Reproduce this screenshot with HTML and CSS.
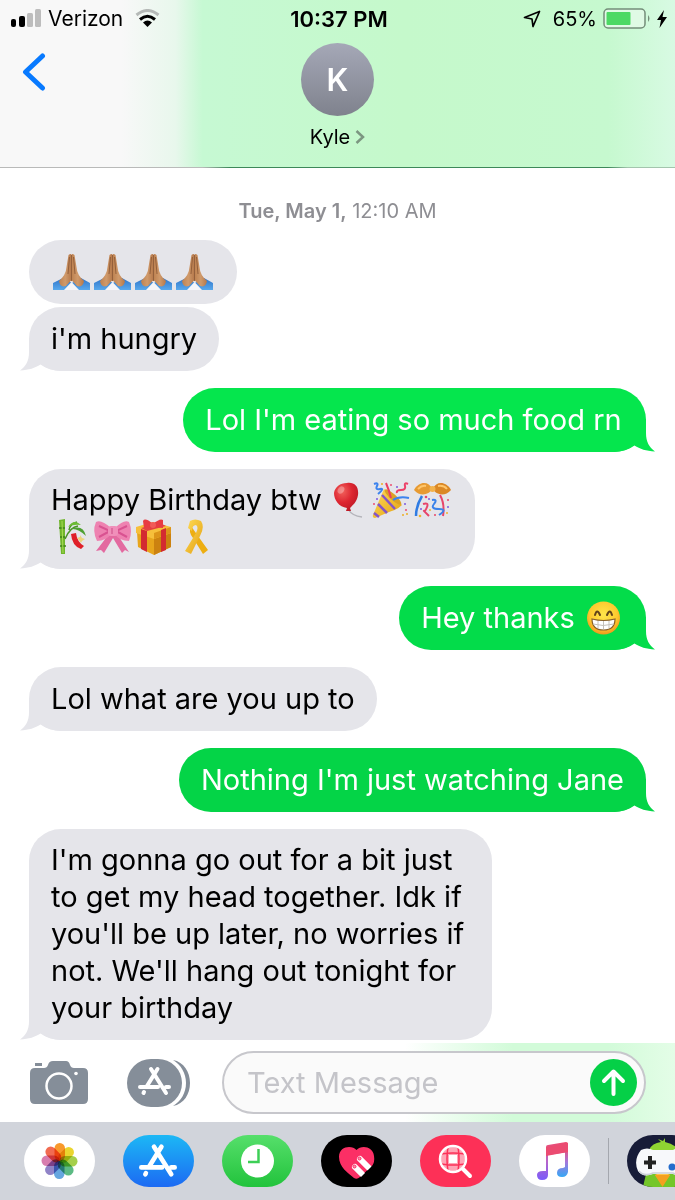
FILE: index.html
```html
<!DOCTYPE html>
<html lang="en">
<head>
<meta charset="utf-8">
<meta name="viewport" content="width=device-width, initial-scale=1">
<title>Kyle</title>
<link rel="stylesheet" href="styles.css">
</head>
<body>
<svg class="defs" aria-hidden="true">
  <defs>
    <linearGradient id="skin" x1="0" x2="1"><stop offset="0" stop-color="#bd8150"/><stop offset=".5" stop-color="#d09a6b"/><stop offset="1" stop-color="#b5784a"/></linearGradient>
    <linearGradient id="sleeve" x1="0" x2="0" y1="0" y2="1"><stop offset="0" stop-color="#2f74c9"/><stop offset="1" stop-color="#58a8ec"/></linearGradient>
    <radialGradient id="red" cx=".35" cy=".3" r=".8"><stop offset="0" stop-color="#f2625c"/><stop offset=".5" stop-color="#dd2631"/><stop offset="1" stop-color="#b81624"/></radialGradient>
    <linearGradient id="gold" x1="0" x2="1" y1="0" y2="1"><stop offset="0" stop-color="#ffdc58"/><stop offset="1" stop-color="#e3a012"/></linearGradient>
    <radialGradient id="face" cx=".5" cy=".4" r=".6"><stop offset="0" stop-color="#ffe64a"/><stop offset=".7" stop-color="#fdc92e"/><stop offset="1" stop-color="#f0981c"/></radialGradient>
    <linearGradient id="note" x1="0" x2="0" y1="0" y2="1"><stop offset="0" stop-color="#ef4a6d"/><stop offset=".5" stop-color="#b865c8"/><stop offset="1" stop-color="#7a5cfa"/></linearGradient>
    <linearGradient id="note-right" x1="0" x2="0" y1="0" y2="1"><stop offset="0" stop-color="#ef4a6d"/><stop offset=".5" stop-color="#a477dc"/><stop offset="1" stop-color="#35a8f5"/></linearGradient>
    <symbol id="tail" viewBox="0 0 41 33">
      <path d="M9 0V14C9 23 6 28 0 32.500C9 32 15 30 20.500 26.500C27 31 34 33 41 33V0Z"/>
    </symbol>
    <symbol id="pray" viewBox="0 0 41 36">
      <path d="M2 36V29L12 24L21 29L30 24L39 29V36H27L21 30L14 36Z" fill="url(#sleeve)"/>
      <path d="M17.500 1Q20 -1 20.500 1V26L15 32Q9 34 8 27Q15 21 15.500 13Z" fill="url(#skin)"/>
      <path d="M23.500 1Q21 -1 20.500 1V26L26 32Q32 34 33 27Q26 21 25.500 13Z" fill="url(#skin)"/>
      <path d="M20.500 1V27M18.500 3L17 20M22.500 3L24 20" stroke="#8f5a35" fill="none" stroke-width=".9"/>
      <path d="M20.500 28L13 36H28Z" fill="#f5f5f8"/>
    </symbol>
    <symbol id="balloon" viewBox="0 0 41 36">
      <path d="M18 27Q22 34 32 35" stroke="#b5b5bb" stroke-width="1.500" fill="none"/>
      <path d="M17 1C25 0 29 5 28 13C27 20 22 24 20 26L21 29H16L17 26C9 25 4 18 4 11C5 5 10 1 17 1Z" fill="url(#red)"/>
      <ellipse cx="11" cy="8" rx="3" ry="4" fill="#fff" opacity=".3" transform="rotate(35 11 8)"/>
    </symbol>
    <symbol id="party" viewBox="0 0 41 36">
      <path d="M13 7L31 23Q26 28 18 30L4 36Q1 36 2 33Z" fill="url(#gold)"/>
      <path d="M11 13L24 27M7 22L16 31M3 31L8 35" stroke="#8455c8" stroke-width="2.500"/>
      <ellipse cx="22" cy="15" rx="11" ry="3" transform="rotate(42 22 15)" fill="#dba126"/>
      <path d="M20 16Q18 8 15 1" stroke="#ea3e61" stroke-width="2" fill="none"/>
      <path d="M22 18Q28 14 38 16M3 2Q8 0 6 4T9 7T7 12" stroke="#3c83ee" stroke-width="2" fill="none"/>
      <path d="M37 2Q33 0 34 4T30 8T26 11" stroke="#ed4168" stroke-width="2" fill="none"/>
      <g fill="#ed4d70"><circle cx="20" cy="3" r="1"/><circle cx="35" cy="28" r="1"/><circle cx="3" cy="22" r="1"/></g>
      <g fill="#7c59df"><circle cx="26" cy="5" r="1"/><circle cx="6" cy="17" r="1"/><circle cx="34" cy="22" r="1"/></g>
      <g fill="#edae24"><circle cx="32" cy="33" r="1"/><circle cx="36" cy="32" r="1"/><circle cx="11" cy="2" r="1"/></g>
    </symbol>
    <symbol id="confetti" viewBox="0 0 41 36">
      <path d="M20 7C17 -1 7 -1 2 8C8 15 17 13 20 7Z" fill="#e79a32"/><path d="M21 7C24 -1 34 -1 39 8C33 15 24 13 21 7Z" fill="#db8825"/>
      <path d="M6 7Q10 3 14 4M26 4Q32 3 35 7" stroke="#ffc66b" stroke-width="2" fill="none"/>
      <circle cx="20.500" cy="7" r="3" fill="#f3b24b"/>
      <path d="M10 14Q4 24 4 34" stroke="#307ce3" stroke-width="2.500" fill="none"/>
      <path d="M28 13Q33 22 31 34M11 22Q17 20 15 25T12 29T17 34" stroke="#e7456a" stroke-width="2" fill="none"/>
      <path d="M20 18Q26 17 22 22T27 27T27 33" stroke="#3b82e9" stroke-width="2" fill="none"/>
      <g fill="#e7456a"><circle cx="14" cy="15" r="1.300"/><circle cx="23" cy="33" r="1"/><circle cx="36" cy="18" r="1"/></g>
      <g fill="#efb52c"><circle cx="8" cy="34" r="1.300"/><circle cx="35" cy="31" r="1"/><circle cx="18" cy="28" r="1"/></g>
      <g fill="#7c59df"><circle cx="17" cy="17" r="1"/><circle cx="36" cy="25" r="1"/><circle cx="9" cy="27" r="1"/></g>
    </symbol>
    <symbol id="bamboo" viewBox="0 0 41 36">
      <path d="M8 1L14 0L14 35H10Z" fill="#6fb52b"/>
      <path d="M8 9H14M9 18H14M9 27H15" stroke="#3f8219" stroke-width="1.500"/><path d="M11 2L12 34" stroke="#a7dc54" stroke-width="1"/>
      <path d="M14 20Q19 8 27 7M18 11Q19 5 26 3" stroke="#4a9525" fill="none" stroke-width="1.500"/>
      <path d="M17 8Q23 -1 30 6Q22 5 17 8Z" fill="#6dbb36"/><path d="M20 10Q32 5 35 17Q27 9 20 10Z" fill="#4fa033"/>
      <path d="M20 15L25 14Q26 23 33 27L30 30Q21 27 20 15Z" fill="#df2029"/>
      <path d="M29 16L31 19L34 20L31 22L30 24L28 21L26 19L29 18Z" fill="#edd57c"/>
    </symbol>
    <symbol id="bow" viewBox="0 0 41 36">
      <path d="M17 15L4 32L9 31L12 34L21 19L30 34L33 31L37 33L25 15Z" fill="#e36aa0"/>
      <path d="M19 9Q9 0 4 3Q0 12 5 22Q14 22 19 15Z" fill="#ee82b1"/><path d="M23 9Q32 0 37 3Q41 12 37 22Q27 22 23 15Z" fill="#ee82b1"/>
      <path d="M7 7L18 12L7 18M35 7L24 12L35 18" stroke="#d95291" stroke-width="2" fill="none"/>
      <rect x="16" y="7" width="10" height="10" rx="3" fill="#f08fba"/><path d="M20 9V15" stroke="#cc4c86"/>
    </symbol>
    <symbol id="gift" viewBox="0 0 41 36">
      <path d="M4 13L21 19L38 13V28L21 36L5 28Z" fill="#e8a51c"/><path d="M21 19L38 13V28L21 36Z" fill="#cc8210"/>
      <path d="M3 8L20 3L38 8V14L21 20L3 14Z" fill="#f6bf3b"/><path d="M21 14L38 8V14L21 20Z" fill="#dc9419"/>
      <path d="M8 10L14 12V33L8 30ZM28 11L33 9V31L28 33Z" fill="#d32b31"/><path d="M8 9L27 4L33 7L14 12Z" fill="#e44141"/>
      <path d="M20 5Q12 -2 10 2L11 9L20 8L30 9L30 1Q27 -1 20 5Z" fill="#e83b42"/><circle cx="20" cy="6" r="3" fill="#f15a58"/>
    </symbol>
    <symbol id="ribbon" viewBox="0 0 41 36">
      <path d="M17 7Q14 13 19 19L29 35L34 31L24 17Z" fill="#edae12"/>
      <path d="M16 2Q21 -1 27 2Q31 8 26 17L17 35L11 32L22 14Q25 8 22 6Q18 6 18 12L14 9Z" fill="url(#gold)"/>
    </symbol>
    <symbol id="grin" viewBox="0 0 41 36">
      <circle cx="20.500" cy="18" r="16.500" fill="url(#face)"/>
      <path d="M12 15Q14 8 17 15M24 15Q27 8 29 15" stroke="#62431a" stroke-width="2" fill="none" stroke-linecap="round"/>
      <path d="M9 19Q20.500 22 32 19Q32 30 20.500 30Q9 30 9 19Z" fill="#fff" stroke="#87602c" stroke-width="1.200"/>
      <path d="M10 24Q20 27 31 24M15 21V28M20.500 21V29M26 21V28" stroke="#c4c0b9" fill="none"/>
    </symbol>
    <symbol id="store-glyph" viewBox="0 0 33 30">
      <g fill="none" stroke="currentColor" stroke-width="4" stroke-linecap="round"><path d="M19.500 3L9 20M6 26L5.500 27M2 21H20M28 21H31M13 3L28 27"/></g>
    </symbol>
  </defs>
</svg>

<div class="phone">
  <header class="top">
    <div class="status">
      <div class="status-left">
        <svg width="30" height="19" viewBox="0 0 30 19" role="img" aria-label="Signal, two of four bars"><rect y="10" width="5" height="8" rx="2"/><rect x="8" y="7" width="6" height="11" rx="2"/><g fill="#bdbdbd"><rect x="16" y="4" width="6" height="14" rx="1.500"/><rect x="24" width="6" height="18" rx="1.500"/></g></svg>
        <span>Verizon</span>
        <svg class="wifi" width="25" height="19" viewBox="0 0 25 19" role="img" aria-label="Wi-Fi"><g fill="none" stroke-width="3"><path d="M1.500 6Q12.500-3 23.500 6" stroke="#b5b9b7"/><path d="M5 10.500Q12.500 4 20 10.500" stroke="#000"/></g><path d="M8 13.500Q12.500 9.500 17 13.500L12.500 18Z"/></svg>
      </div>
      <time class="clock">10:37 PM</time>
      <div class="status-right">
        <svg class="location" width="18" height="18" viewBox="0 0 18 18" aria-label="Location" role="img"><path d="M16.500 1.500L10 16.500L9 9L1.500 7.500Z" fill="none" stroke="#000" stroke-width="1.700" stroke-linejoin="round"/></svg>
        <span>65%</span>
        <svg width="48" height="21" viewBox="0 0 48 21" role="img" aria-label="Battery charging"><rect x="1" y="1" width="41" height="19" rx="4" fill="#e0fae5" stroke="#748d79" stroke-width="1.500"/><rect x="3.500" y="4" width="24" height="13" rx="1" fill="#4cd964"/><path d="M45 7Q48 10.500 45 14Z" fill="#748d79"/></svg>
        <svg width="10" height="18" viewBox="0 0 10 18" aria-hidden="true"><path d="M7 0L0 10H4L2.500 18L10 7H5.500Z"/></svg>
      </div>
    </div>
    <nav class="nav">
      <button class="back" type="button" aria-label="Back"><svg width="24" height="38" viewBox="0 0 24 38"><path d="M20.500 3L3.500 19L20.500 35" fill="none" stroke="#087aff" stroke-width="5" stroke-linecap="round" stroke-linejoin="round"/></svg></button>
      <button class="contact" type="button">
        <span class="avatar">K</span>
        <span class="name">Kyle <svg width="10" height="14" viewBox="0 0 10 14" aria-hidden="true"><path d="M1.500 1L8 7L1.500 13" fill="none" stroke="#7c9681" stroke-width="2.500"/></svg></span>
      </button>
    </nav>
  </header>

  <main class="thread">
    <p class="stamp"><b>Tue, May 1,</b> 12:10 AM</p>
    <div class="bubble in first"><p><svg class="emoji" role="img" aria-label="Folded hands"><use href="#pray"/></svg><svg class="emoji" role="img" aria-label="Folded hands"><use href="#pray"/></svg><svg class="emoji" role="img" aria-label="Folded hands"><use href="#pray"/></svg><svg class="emoji" role="img" aria-label="Folded hands"><use href="#pray"/></svg></p></div>
    <div class="bubble in"><p>i'm hungry</p><svg class="tail"><use href="#tail"/></svg></div>
    <div class="bubble out bright wide"><p>Lol I'm eating so much food rn</p><svg class="tail"><use href="#tail"/></svg></div>
    <div class="bubble in"><p>Happy Birthday btw <svg class="emoji" role="img" aria-label="Balloon"><use href="#balloon"/></svg><svg class="emoji" role="img" aria-label="Party popper"><use href="#party"/></svg><svg class="emoji" role="img" aria-label="Confetti ball"><use href="#confetti"/></svg><br><svg class="emoji" role="img" aria-label="Tanabata tree"><use href="#bamboo"/></svg><svg class="emoji" role="img" aria-label="Bow"><use href="#bow"/></svg><svg class="emoji" role="img" aria-label="Gift"><use href="#gift"/></svg><svg class="emoji" role="img" aria-label="Ribbon"><use href="#ribbon"/></svg></p><svg class="tail"><use href="#tail"/></svg></div>
    <div class="bubble out"><p>Hey thanks <svg class="emoji" role="img" aria-label="Grinning face"><use href="#grin"/></svg></p><svg class="tail"><use href="#tail"/></svg></div>
    <div class="bubble in"><p>Lol what are you up to</p><svg class="tail"><use href="#tail"/></svg></div>
    <div class="bubble out deep wide"><p>Nothing I'm just watching Jane</p><svg class="tail"><use href="#tail"/></svg></div>
    <div class="bubble in wide"><p>I'm gonna go out for a bit just<br>to get my head together. Idk if<br>you'll be up later, no worries if<br>not. We'll hang out tonight for<br>your birthday</p><svg class="tail"><use href="#tail"/></svg></div>
  </main>

  <form class="compose">
    <button type="button" class="tool" aria-label="Camera"><svg width="58" height="45" viewBox="0 0 58 45"><path d="M5 3H12V6H5Z" fill="#858e99"/><path d="M5 8H14Q17 8 18 5Q19 1 23 1H36Q39 1 40 5Q41 8 44 8H53Q58 8 58 13V39Q58 44 53 44H5Q0 44 0 39V13Q0 8 5 8Z" fill="#858e99"/><circle cx="29" cy="26" r="12.500" fill="none" stroke="#fff" stroke-width="2.500"/><circle cx="46" cy="13.500" r="1.800" fill="#fff"/></svg></button>
    <button type="button" class="tool" aria-label="Apps"><svg width="63" height="48" viewBox="0 0 63 48"><path d="M46 1C57 3 63 13 63 24S57 45 46 47C54 42 59 34 59 24S54 6 46 1Z" fill="#858e99"/><rect width="55" height="48" rx="24" fill="#858e99"/><use href="#store-glyph" x="11" y="7" width="33" height="30" color="#fff"/></svg></button>
    <div class="field">
      <input type="text" placeholder="Text Message" aria-label="Text Message">
      <button type="submit" class="send" aria-label="Send"><svg width="47" height="47" viewBox="0 0 47 47"><circle cx="23.500" cy="23.500" r="23.500" fill="#05d047"/><path d="M23.500 35V13M14 22L23.500 12.500L33 22" fill="none" stroke="#fff" stroke-width="4" stroke-linecap="round" stroke-linejoin="round"/></svg></button>
    </div>
  </form>

  <nav class="apps" aria-label="Message apps">
    <button type="button" class="app photos" aria-label="Photos"><svg width="71" height="52" viewBox="-35.5 -26 71 52"><g class="petals"><rect x="-5" y="-18" width="10.500" height="18" rx="5.200" fill="#f8992c"/><rect x="-5" y="-18" width="10.500" height="18" rx="5.200" fill="#ead52f" transform="rotate(45)"/><rect x="-5" y="-18" width="10.500" height="18" rx="5.200" fill="#a5cf4b" transform="rotate(90)"/><rect x="-5" y="-18" width="10.500" height="18" rx="5.200" fill="#5cba83" transform="rotate(135)"/><rect x="-5" y="-18" width="10.500" height="18" rx="5.200" fill="#65a6df" transform="rotate(180)"/><rect x="-5" y="-18" width="10.500" height="18" rx="5.200" fill="#9083c7" transform="rotate(225)"/><rect x="-5" y="-18" width="10.500" height="18" rx="5.200" fill="#d87dae" transform="rotate(270)"/><rect x="-5" y="-18" width="10.500" height="18" rx="5.200" fill="#f16b51" transform="rotate(315)"/></g></svg></button>
    <button type="button" class="app store" aria-label="App Store"><svg width="71" height="52" viewBox="0 0 71 52"><use href="#store-glyph" x="16" y="8" width="38" height="35" color="#fff"/></svg></button>
    <button type="button" class="app recents" aria-label="Recents"><svg width="71" height="52" viewBox="0 0 71 52"><circle cx="35.500" cy="26" r="16.500" fill="#fff"/><path d="M36.500 14V27H26" fill="none" stroke="#3dcf56" stroke-width="2.500"/></svg></button>
    <button type="button" class="app touch" aria-label="Digital Touch"><svg width="71" height="52" viewBox="0 0 71 52"><path d="M35.500 15C31 10 18 11 18 22C18 32 27 38 33 43Q36 45 39 42L51 31Q54 27 53 21C52 11 40 10 35.500 15Z" fill="#fb2f65"/><g stroke="#fff" stroke-width="6" stroke-linecap="round"><path d="M39 24L48 33M34 32L41 39"/></g><path d="M39 43L51 31L54 36L43 46Z" fill="#000"/><g fill="#fb8fac" stroke="#fb2f65"><circle cx="38.500" cy="23.500" r="1.500"/><circle cx="33.500" cy="31.500" r="1.500"/></g></svg></button>
    <button type="button" class="app images" aria-label="Images"><svg width="71" height="52" viewBox="0 0 71 52"><circle cx="33" cy="24" r="12" fill="#ffa5b6"/><path d="M29 20H37V28H29Z" fill="#fff"/><path d="M28 12Q26 24 28 36M38 12Q40 24 38 36M21 19Q33 17 45 19M21 29Q33 31 45 29" fill="none" stroke="#fc3158" stroke-width="1.500"/><circle cx="33" cy="24" r="13" fill="none" stroke="#fff" stroke-width="2.500"/><path d="M43 34L50 41" stroke="#fff" stroke-width="4" stroke-linecap="round"/></svg></button>
    <button type="button" class="app music" aria-label="Music"><svg width="71" height="52" viewBox="0 0 71 52"><path d="M27 12Q27 10 29 10L47 7Q49 7 49 9V17L29 20V40Q29 45 23 45Q18 45 18 40Q18 36 24 36H27Z" fill="url(#note)"/><path d="M46 12H49V37Q48 42 43 42Q38 42 38 38Q38 33 44 33L46 32Z" fill="url(#note-right)"/><path d="M27 12L49 8V17L27 21Z" fill="#eb4b71"/></svg></button>
    <span class="divider"></span>
    <button type="button" class="app game" aria-label="GamePigeon"><svg width="71" height="52" viewBox="0 0 71 52"><path d="M22 15Q25 8 34 7L31 4L36 6L38 3V7Q48 9 52 16Z" fill="#8fd432"/><path d="M16 52L19 39Q35 34 52 39L55 52Z" fill="#74c629"/><path d="M28 40L35.500 37L43 40L35.500 52Z" fill="#f4a01f"/><path d="M28 40L35.500 37L43 40L36 43Z" fill="#ffc44a"/><path d="M14 15Q20 12 26 15H46Q53 11 60 17Q66 36 57 40Q52 42 46 39H26Q16 43 11 36Q6 25 14 15Z" fill="#f7f8fb"/><path d="M12 36Q17 42 26 38H46Q54 42 60 36" fill="none" stroke="#ccd0d8" stroke-width="1.500"/><path d="M28 40H43L35.500 51Z" fill="#f4a01f"/><path d="M23 21V34M17 27.500H29" stroke="#222" stroke-width="4"/><circle cx="45" cy="32" r="3.500" fill="#246ccc"/><circle cx="52" cy="25" r="3.500" fill="#d23d3c"/></svg></button>
  </nav>
</div>
</body>
</html>
```

FILE: styles.css
```css
* { box-sizing: border-box; }

body {
  margin: 0;
  background: #fff;
  color: #000;
  font-family: Inter, "Liberation Sans", sans-serif;
}

p { margin: 0; }

button {
  display: block;
  padding: 0;
  border: 0;
  background: none;
  color: inherit;
  font: inherit;
}

svg { display: block; flex: none; }

.defs { position: absolute; width: 0; height: 0; }

.phone {
  display: flex;
  flex-direction: column;
  min-height: 100vh;
  overflow: hidden;
}

/* Translucent top bar */
.top {
  padding-bottom: 19px;
  background:
    linear-gradient(90deg, #b9bab9 30%, #3d8859 34%, #3d8859 90%, #a3c5ad 93%) bottom / 100% 1px no-repeat,
    linear-gradient(90deg, #f8f8f8 18%, #e8f7ec 26%, #c6f9d3 30%, #c5f9cb 60%, #c6f9cf 90%, #d8fae3 100%);
}

.status {
  display: grid;
  grid-template-columns: 1fr auto 1fr;
  align-items: center;
  height: 37px;
  padding: 0 8px 0 11px;
  font-size: 20px;
}

.status-left, .status-right { display: flex; align-items: center; }
.status-left { gap: 7px; font-size: 21px; }
.status-right { gap: 6px; justify-content: flex-end; }
.wifi { margin-left: 5px; }
.location { margin-right: 6px; }
.clock { font-size: 22px; font-weight: 600; }

.nav {
  display: grid;
  grid-template-columns: 1fr auto 1fr;
  align-items: start;
  padding: 6px 22px 0;
}

.back { justify-self: start; margin-top: 10px; }
.contact { display: flex; flex-direction: column; align-items: center; gap: 9px; }

.avatar {
  display: grid;
  place-items: center;
  width: 73px;
  height: 73px;
  border-radius: 50%;
  background: linear-gradient(#a5a8b7, #7f828d);
  color: #fff;
  font-size: 31px;
  font-weight: 600;
}

.name { display: flex; align-items: center; gap: 5px; font-size: 20px; line-height: 24px; }

/* Conversation */
.thread {
  display: flex;
  flex: 1;
  flex-direction: column;
  align-items: flex-start;
  gap: 17px;
  padding: 31px 29px 3px;
}

.stamp {
  align-self: center;
  color: #8e8e93;
  font-size: 20px;
  line-height: 24px;
}

.stamp b { font-weight: 600; }

.bubble {
  position: relative;
  display: flex;
  align-items: center;
  min-height: 64px;
  padding: 12px 22px 14px;
  border-radius: 32px;
  font-size: 29px;
  line-height: 37px;
  white-space: nowrap;
}

.bubble p { position: relative; z-index: 1; }

.in { background: #e5e5ea; color: #000; fill: #e5e5ea; }
.out { align-self: flex-end; background: #03dc4a; color: #fff; fill: #03dc4a; }
.bright { background: #05e64d; fill: #05e64d; }
.deep { background: #04d447; fill: #04d447; }
.wide { min-width: 75%; }
.first { margin-bottom: -14px; }

.tail {
  position: absolute;
  bottom: 0;
  left: -9px;
  width: 41px;
  height: 33px;
}

.out .tail { right: -9px; left: auto; transform: scaleX(-1); }

.emoji { display: inline-block; width: 41px; height: 36px; vertical-align: -8px; }

/* Message entry */
.compose {
  display: flex;
  align-items: center;
  padding: 8px 29px 8px 30px;
  background: linear-gradient(90deg, #fff 60%, #d2fbd9 76%, #d2fbd9 90%, #e4fde7);
}

.tool + .tool { margin: 0 32px 0 39px; }

.field {
  display: flex;
  flex: 1;
  align-items: center;
  min-width: 0;
  padding: 6px 7px 6px 23px;
  border: 2px solid #c7c7cc;
  border-radius: 32px;
  background: #fafafa;
}

.field input {
  flex: 1;
  min-width: 0;
  height: 47px;
  padding: 0;
  border: 0;
  outline: 0;
  background: none;
  font: inherit;
  font-size: 29px;
}

.field input::placeholder { color: #c4c4c9; opacity: 1; }

/* App drawer */
.apps {
  display: flex;
  gap: 28px;
  padding: 13px 0 14px 24px;
  background: #d1d4db;
}

.app {
  flex: none;
  border-radius: 26px;
  overflow: hidden;
}

.photos, .music { background: #fff; }
.petals rect { mix-blend-mode: multiply; }
.store { background: linear-gradient(#1cb8f5, #1c6af3); }
.recents { background: linear-gradient(#56df6b, #22c33c); }
.touch { background: #000; }
.images { background: #fd3057; }
.game { background: #171c38; }

.divider {
  flex: none;
  align-self: center;
  width: 1px;
  height: 46px;
  margin: 0 -10px;
  background: #a4a7ae;
}
```
